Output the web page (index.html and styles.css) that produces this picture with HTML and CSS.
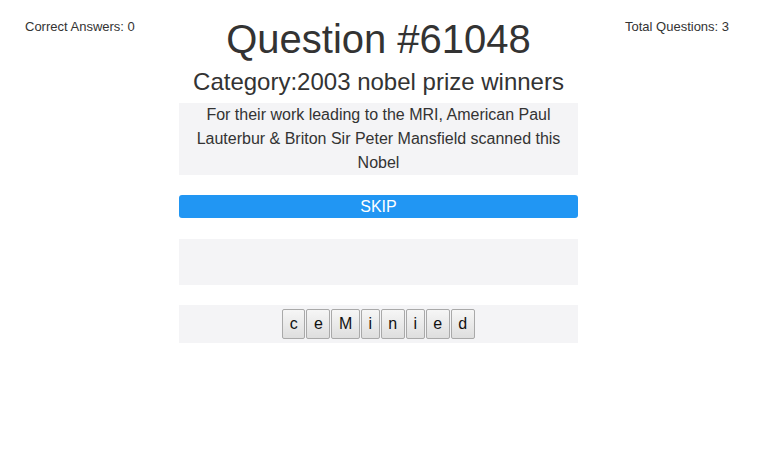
FILE: index.html
```html
<!DOCTYPE html>
<html>
<head>
<meta charset="utf-8">
<link rel="stylesheet" href="styles.css">
</head>
<body>
<div class="page">
  <div class="side left">Correct Answers: 0</div>
  <div class="main">
    <h1 class="title">Question #61048</h1>
    <h2 class="category">Category:2003 nobel prize winners</h2>
    <div class="question">For their work leading to the MRI, American Paul Lauterbur &amp; Briton Sir Peter Mansfield scanned this Nobel</div>
    <button class="skip">SKIP</button>
    <div class="answer"></div>
    <div class="letters"><button class="letter">c</button><button class="letter">e</button><button class="letter">M</button><button class="letter">i</button><button class="letter">n</button><button class="letter">i</button><button class="letter">e</button><button class="letter">d</button></div>
  </div>
  <div class="side right">Total Questions: 3</div>
</div>
</body>
</html>
```

FILE: styles.css
```css
html, body {
  margin: 0;
  padding: 0;
  background: #fff;
}
body {
  font-family: "Liberation Sans", Arial, sans-serif;
  color: #333;
}
.page {
  display: flex;
  width: 774px;
}
.side {
  font-size: 13px;
  line-height: 18px;
  padding-top: 18px;
}
.left {
  width: 179px;
  box-sizing: border-box;
  padding-left: 25px;
}
.right {
  flex: 1;
  padding-left: 47px;
}
.main {
  width: 399px;
  display: flex;
  flex-direction: column;
}
.title {
  margin: 16px 0 0;
  font-size: 40px;
  font-weight: 400;
  line-height: 46px;
  text-align: center;
}
.category {
  margin: 3px 0 0;
  font-size: 24px;
  font-weight: 400;
  line-height: 34px;
  text-align: center;
}
.question {
  margin-top: 4px;
  background: #f4f4f6;
  font-size: 16px;
  line-height: 24px;
  text-align: center;
  padding: 0 12px;
}
.skip {
  margin-top: 20px;
  height: 23px;
  border: none;
  border-radius: 3px;
  background: #2196f3;
  color: #fff;
  font-family: "Liberation Sans", Arial, sans-serif;
  font-size: 16px;
  padding: 0;
}
.answer {
  margin-top: 21px;
  height: 46px;
  background: #f4f4f6;
}
.letters {
  margin-top: 20px;
  height: 38px;
  box-sizing: border-box;
  padding-top: 4px;
  background: #f4f4f6;
  display: flex;
  justify-content: center;
  align-items: flex-start;
  gap: 1px;
}
.letter {
  height: 30px;
  margin: 0;
  padding: 0 6.6px;
  border: 1px solid #a9a9a9;
  border-radius: 2px;
  background: linear-gradient(#f6f6f6, #dedede);
  color: #111;
  font-family: "Liberation Sans", Arial, sans-serif;
  font-size: 16px;
}
```
